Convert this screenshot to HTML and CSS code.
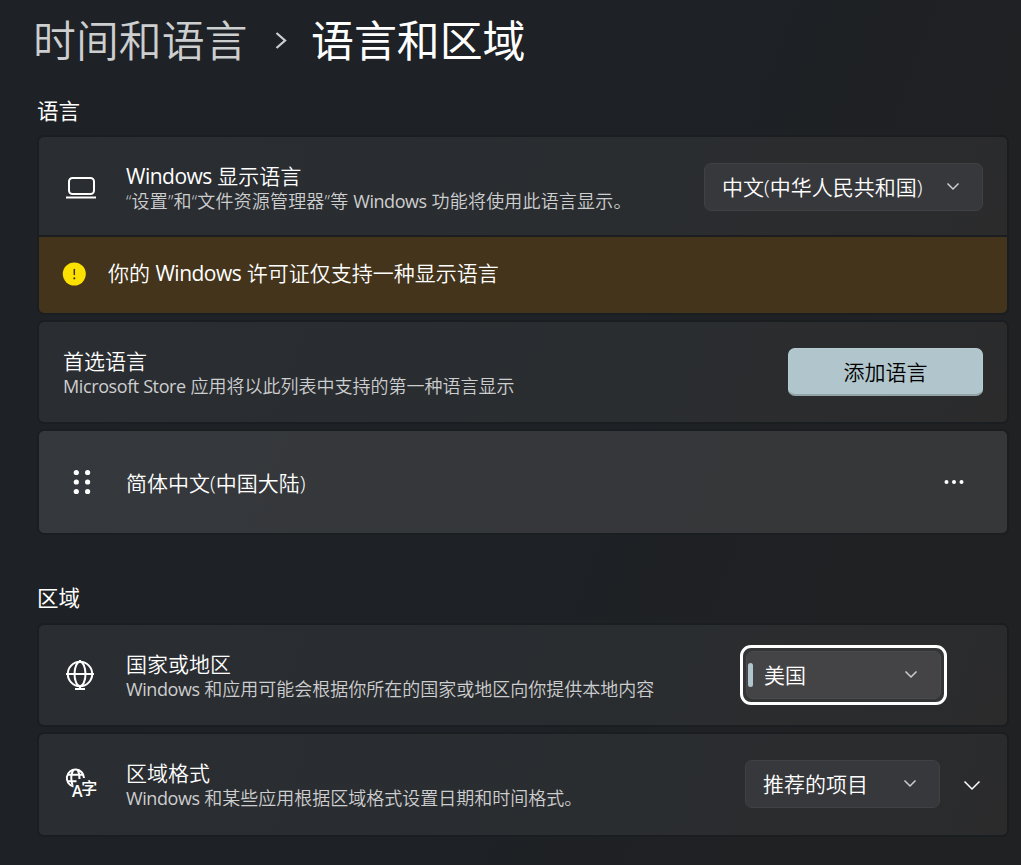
FILE: index.html
```html
<!DOCTYPE html>
<html lang="zh-CN">
<head>
<meta charset="utf-8">
<title>语言和区域</title>
<link rel="stylesheet" href="styles.css">
</head>
<body>
<main class="page">
  <h1 class="crumbs">
    <span class="crumb-parent">时间和语言</span>
    <svg class="crumb-sep" width="12" height="18" viewBox="0 0 12 18"><path d="M1.500 1 10 8.500l-8.500 7.500"/></svg>
    <span class="crumb-current">语言和区域</span>
  </h1>

  <h2 class="section-title">语言</h2>
  <section class="card display-card">
    <svg class="icon" width="32" height="32" viewBox="0 0 32 32"><rect x="5" y="7" width="25" height="16" rx="3.500"/><path d="M2 26.500h30"/></svg>
    <div class="copy">
      <div class="title"><span class="latin">Windows</span> 显示语言</div>
      <div class="sub">“设置”和“文件资源管理器”等 <span class="latin">Windows</span> 功能将使用此语言显示。</div>
    </div>
    <button class="select select-language"><span>中文(中华人民共和国)</span><svg class="chev" width="14" height="9" viewBox="0 0 14 9"><path d="M1.500 1.500 7 7l5.500-5.500"/></svg></button>
  </section>
  <section class="banner">
    <svg width="24" height="24" viewBox="0 0 24 24"><circle cx="12.300" cy="12" r="11.500" fill="#fce100"/><path d="M12.300 7.500v5" stroke="#43341b" stroke-width="1.500" stroke-linecap="round"/><circle cx="12.300" cy="16.300" r="1.100" fill="#43341b"/></svg>
    <div class="title">你的 <span class="latin">Windows</span> 许可证仅支持一种显示语言</div>
  </section>

  <section class="card preferred-card">
    <div class="copy">
      <div class="title">首选语言</div>
      <div class="sub"><span class="latin latin-store">Microsoft Store</span> 应用将以此列表中支持的第一种语言显示</div>
    </div>
    <button class="add">添加语言</button>
  </section>

  <section class="card item-card">
    <svg class="grip" width="18" height="26" viewBox="0 0 18 26"><circle cx="3.300" cy="3.500" r="2.600"/><circle cx="14.600" cy="3.500" r="2.600"/><circle cx="3.300" cy="13" r="2.600"/><circle cx="14.600" cy="13" r="2.600"/><circle cx="3.300" cy="22.500" r="2.600"/><circle cx="14.600" cy="22.500" r="2.600"/></svg>
    <div class="title">简体中文(中国大陆)</div>
    <svg class="more" width="20" height="6" viewBox="0 0 20 6"><circle cx="2.500" cy="3" r="2"/><circle cx="10" cy="3" r="2"/><circle cx="17.500" cy="3" r="2"/></svg>
  </section>

  <h2 class="section-title region-title">区域</h2>
  <section class="card country-card">
    <svg class="icon" width="32" height="32" viewBox="0 0 32 32"><circle cx="16" cy="15" r="12.200"/><ellipse cx="16" cy="15" rx="5.500" ry="12.200"/><path d="M2 15h28M16 1v2M16 27v3M11 30h10"/></svg>
    <div class="copy">
      <div class="title">国家或地区</div>
      <div class="sub"><span class="latin">Windows</span> 和应用可能会根据你所在的国家或地区向你提供本地内容</div>
    </div>
    <div class="focus-ring">
      <button class="select select-country"><i class="marker"></i><span>美国</span><svg class="chev" width="14" height="9" viewBox="0 0 14 9"><path d="M1.500 1.500 7 7l5.500-5.500"/></svg></button>
    </div>
  </section>
  <section class="card format-card">
    <svg class="icon icon-format" width="32" height="32" viewBox="0 0 32 32"><path d="M9.500 19.500A8.600 8.600 0 1 1 20 11"/><path d="M8.500 18.500C6.800 13 6.800 7 9.500 2.500M13.500 2.500c1.500 2.500 2 5.500 2 9.500M3.500 7.800h15.500M3.500 14.200h9"/><text class="icon-letter" x="8" y="30">A</text><text class="icon-hanzi" x="17.200" y="26.500">字</text></svg>
    <div class="copy">
      <div class="title">区域格式</div>
      <div class="sub"><span class="latin">Windows</span> 和某些应用根据区域格式设置日期和时间格式。</div>
    </div>
    <button class="select select-format"><span>推荐的项目</span><svg class="chev" width="14" height="9" viewBox="0 0 14 9"><path d="M1.500 1.500 7 7l5.500-5.500"/></svg></button>
    <svg class="expand" width="18" height="11" viewBox="0 0 18 11"><path d="M1.500 1.500 9 9l7.500-7.500"/></svg>
  </section>
</main>
</body>
</html>
```
FILE: styles.css
```css
* { box-sizing: border-box; }
body {
  margin: 0;
  background: linear-gradient(110deg, #1e2226 0%, #1e2125 55%, #202122 100%);
  color: #fff;
  font-family: "Open Sans", "Noto Sans CJK SC", sans-serif;
  font-weight: 350;
}
.page {
  width: 1021px;
  height: 865px;
  padding: 0 14px 0 39px;
  overflow: hidden;
}
svg { flex: none; display: block; }
.crumbs {
  display: flex;
  align-items: center;
  height: 82px;
  margin: 0 0 0 -6px;
  font-size: 42.9px;
  font-weight: 350;
  line-height: 82px;
  white-space: nowrap;
}
.crumb-parent { width: 242px; color: #cdcecf; }
.crumb-sep {
  width: 12px;
  margin-right: 24px;
  fill: none;
  stroke: #cdcecf;
  stroke-width: 2.300;
}
.crumb-current { font-weight: 400; }
.section-title {
  height: 28px;
  margin: 15px 0 12px -2px;
  font-size: 21.500px;
  font-weight: 400;
  line-height: 28px;
}
.card {
  display: flex;
  align-items: center;
  height: 100px;
  padding-right: 24px;
  border-radius: 5px;
  background: linear-gradient(110deg, #2a2d31 0%, #2a2d30 60%, #2b2b2c 100%);
  box-shadow: 0 0 0 2px #1b1e20;
}
.display-card { height: 98px; padding-top: 2px; border-radius: 5px 5px 0 0; }
.icon {
  margin: 0 30px 0 25px;
  fill: none;
  stroke: #fff;
  stroke-width: 2;
}
.copy { flex: 1; padding-top: 4px; }
.title { font-size: 21px; line-height: 26px; white-space: nowrap; }
.sub { color: #cdcecf; font-size: 18px; line-height: 25px; white-space: nowrap; }
.copy .title { height: 25px; line-height: 25px; }
.latin { font-weight: 400; letter-spacing: -0.024em; }
.latin-store { letter-spacing: -0.022em; }
.display-card .sub { letter-spacing: 0.010em; }
.display-card .copy { padding-top: 3px; }
.banner {
  display: flex;
  align-items: center;
  gap: 22px;
  height: 76px;
  margin: 2px 0 9px;
  padding: 0 24px 3px 23px;
  border-radius: 0 0 5px 5px;
  background: #43341b;
  box-shadow: 0 0 0 2px #1b1e20;
}
.banner .title { padding-bottom: 2px; }
.preferred-card { margin-bottom: 9px; padding-left: 24px; }
.item-card {
  height: 102px;
  padding-left: 34px;
  background: linear-gradient(110deg, #35383c 0%, #35373a 60%, #363738 100%);
}
.grip, .more { fill: #fff; }
.item-card .title { flex: 1; padding: 1px 0 0 35px; }
.more { margin-right: 19px; }
.region-title { margin: 51px 0 13px -2px; }
.country-card { padding-right: 60px; margin-bottom: 9px; }
.format-card { height: 101px; padding-right: 26px; padding-bottom: 1px; }
button { font: inherit; }
.select {
  display: flex;
  align-items: center;
  justify-content: space-between;
  height: 48px;
  padding: 0 22px 3px 17px;
  border: 1px solid #404143;
  border-radius: 7px;
  background: #37383b;
  color: #fff;
  font-size: 21px;
  white-space: nowrap;
}
.select-language { width: 279px; }
.chev, .expand { fill: none; stroke: #cdcecf; stroke-width: 1.500; }
.chev { position: relative; top: 1px; }
.add {
  width: 195px;
  height: 48px;
  padding: 0 0 1px;
  border: 1px solid #b6cbd0;
  border-bottom: 2px solid #93a4a9;
  border-radius: 7px;
  background: #b0c6cc;
  color: #000;
  font-size: 21px;
}
.focus-ring {
  width: 207px;
  height: 60px;
  padding: 3px;
  border: 3px solid #fff;
  border-radius: 11px;
  background: #343536;
}
.select-country {
  width: 195px;
  padding-left: 1px;
  padding-right: 22px;
  border-color: #4b4b4d;
  background: #444446;
  gap: 11px;
}
.select-country span { flex: 1; text-align: left; }
.marker { position: relative; top: 1px; width: 5px; height: 24px; border-radius: 3px; background: #b0c6cc; }
.select-format { width: 195px; margin-right: 23px; }
.expand { stroke: #fff; margin-top: 3px; }
.icon-format { overflow: visible; position: relative; top: -1px; }
.icon-letter, .icon-hanzi { fill: #fff; stroke: none; font-weight: 600; }
.icon-letter { font-size: 16px; }
.icon-hanzi { font-size: 16px; font-weight: 500; }
```
